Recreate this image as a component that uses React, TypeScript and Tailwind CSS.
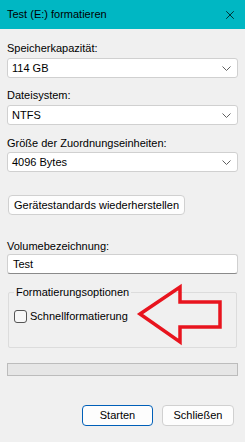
import { X } from "lucide-react";

function Chevron() {
	return (
		<svg width="9" height="5" viewBox="0 0 9 5" className="text-[#606060]">
			<path d="M0.5 0.5 L4.5 4.5 L8.5 0.5" fill="none" stroke="currentColor" strokeWidth="1" />
		</svg>
	);
}

function Select({ value }: { value: string }) {
	return (
		<div className="mx-[7px] flex h-[20px] items-center justify-between rounded-[3px] border border-[#d0d0d0] bg-white pr-[6px] pl-[4px] text-[11px] leading-none">
			<span>{value}</span>
			<Chevron />
		</div>
	);
}

function Label({ text, className = "" }: { text: string; className?: string }) {
	return <div className={`mx-[7px] h-[16px] text-[11px] leading-[16px] ${className}`}>{text}</div>;
}

export default function App() {
	return (
		<div className="relative h-[442px] w-[245px] overflow-hidden bg-[#f0f0f0] font-['Liberation_Sans',Arial,sans-serif] text-black">
			{/* title bar */}
			<div className="flex h-[29px] items-center justify-between bg-[#00b7c3] pr-[8px] pl-[7px]">
				<span className="text-[11px]">Test (E:) formatieren</span>
				<X className="h-[14px] w-[14px]" strokeWidth={1.25} />
			</div>

			<Label text="Speicherkapazität:" className="mt-[11px]" />
			<div className="mt-[2px]">
				<Select value="114 GB" />
			</div>

			<Label text="Dateisystem:" className="mt-[9px]" />
			<div className="mt-[2px]">
				<Select value="NTFS" />
			</div>

			<Label text="Größe der Zuordnungseinheiten:" className="mt-[10px]" />
			<div className="mt-[1px]">
				<Select value="4096 Bytes" />
			</div>

			<div className="mt-[23px] ml-[8px] flex h-[20px] w-[177px] items-center justify-center rounded-[4px] border border-[#d0d0d0] bg-[#fdfdfd] text-[11px] whitespace-nowrap">
				Gerätestandards wiederherstellen
			</div>

			<Label text="Volumebezeichnung:" className="mt-[23px]" />
			<div className="mx-[7px] flex h-[20px] items-center rounded-[3px] border border-[#d0d0d0] border-b-[#8a8a8a] bg-white pl-[5px] text-[11px]">
				Test
			</div>

			{/* group box */}
			<div className="relative mx-[8px] mt-[18px] h-[56px] rounded-[2px] border border-[#dcdcdc]">
				<span className="absolute -top-[9px] left-[5px] bg-[#f0f0f0] px-[2px] text-[11px] leading-[16px]">
					Formatierungsoptionen
				</span>
				<div className="mt-[15px] ml-[5px] flex items-center gap-[3px]">
					<div className="h-[13px] w-[13px] rounded-[3px] border border-[#555] bg-[#f7f7f7]" />
					<span className="text-[11px] leading-[16px]">Schnellformatierung</span>
				</div>
			</div>

			{/* progress */}
			<div className="mx-[7px] mt-[15px] h-[13px] border border-[#bcbcbc] bg-[#e6e6e6]" />

			<div className="mt-[29px] flex justify-end gap-[9px] pr-[11px]">
				<div className="flex h-[21px] w-[71px] items-center justify-center rounded-[4px] border border-[#005fb8] bg-[#fdfdfd] text-[11px]">
					Starten
				</div>
				<div className="flex h-[21px] w-[72px] items-center justify-center rounded-[4px] border border-[#d0d0d0] bg-[#fdfdfd] text-[11px]">
					Schließen
				</div>
			</div>

			{/* red annotation arrow */}
			<svg className="pointer-events-none absolute top-0 left-0" width="245" height="442">
				<polygon
					points="140,314 180,287 180,302 220,302 220,327 180,327 180,342"
					fill="none"
					stroke="#e8141e"
					strokeWidth="3.5"
					strokeLinejoin="miter"
				/>
			</svg>
		</div>
	);
}
